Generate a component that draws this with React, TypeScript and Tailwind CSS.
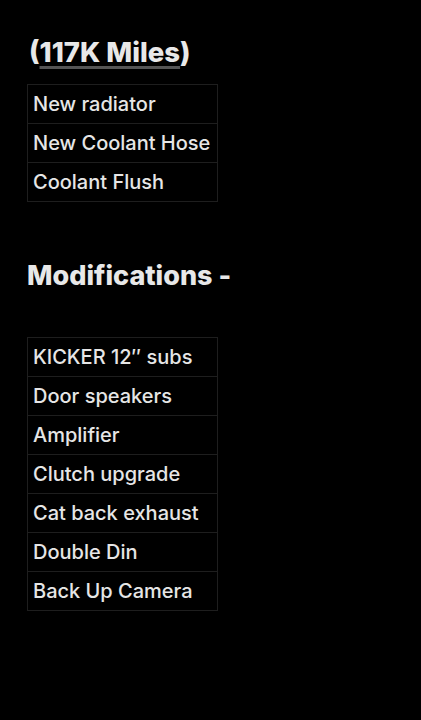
const service = ["New radiator", "New Coolant Hose", "Coolant Flush"];

const mods = [
  "KICKER 12\u2033 subs",
  "Door speakers",
  "Amplifier",
  "Clutch upgrade",
  "Cat back exhaust",
  "Double Din",
  "Back Up Camera",
];

function ItemTable({ items }: { items: string[] }) {
  return (
    <table className="w-[191px] border-collapse">
      <tbody>
        {items.map((item) => (
          <tr key={item}>
            <td className="h-[39px] border border-[#1e1e1e] px-[5px] pb-[1px] text-[20px] font-medium leading-none text-[#e6e6e6] whitespace-nowrap">
              {item}
            </td>
          </tr>
        ))}
      </tbody>
    </table>
  );
}

export default function App() {
  return (
    <div
      className="min-h-[720px] w-full bg-black pl-[27px] pt-[36px]"
      style={{ fontFamily: "Inter, 'Noto Sans', sans-serif" }}
    >
      <h2 className="pl-[2px] text-[27.5px] font-extrabold leading-[32px] text-[#e8e8e8]">
        (
        <span className="underline decoration-[#555555] decoration-[3px] underline-offset-[4px]">
          117K Miles
        </span>
        )
      </h2>

      <div className="mt-[16px]">
        <ItemTable items={service} />
      </div>

      <h2 className="mt-[58px] text-[27px] font-extrabold leading-[32px] text-[#e8e8e8]">
        Modifications -
      </h2>

      <div className="mt-[45px]">
        <ItemTable items={mods} />
      </div>
    </div>
  );
}
